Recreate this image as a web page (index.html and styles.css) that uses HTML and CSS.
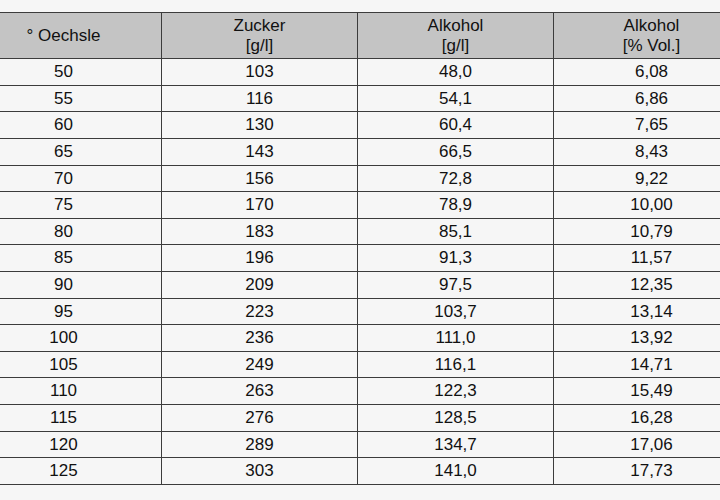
FILE: index.html
```
<!DOCTYPE html>
<html lang="de">
<head>
<meta charset="utf-8">
<title>Oechsle Tabelle</title>
<link rel="stylesheet" href="styles.css">
</head>
<body>
<div class="wrap">
<table class="oechsle">
  <colgroup><col><col><col><col></colgroup>
  <thead>
    <tr><th>° Oechsle</th><th>Zucker<br>[g/l]</th><th>Alkohol<br>[g/l]</th><th>Alkohol<br>[% Vol.]</th></tr>
  </thead>
  <tbody>
    <tr><td>50</td><td>103</td><td>48,0</td><td>6,08</td></tr>
    <tr><td>55</td><td>116</td><td>54,1</td><td>6,86</td></tr>
    <tr><td>60</td><td>130</td><td>60,4</td><td>7,65</td></tr>
    <tr><td>65</td><td>143</td><td>66,5</td><td>8,43</td></tr>
    <tr><td>70</td><td>156</td><td>72,8</td><td>9,22</td></tr>
    <tr><td>75</td><td>170</td><td>78,9</td><td>10,00</td></tr>
    <tr><td>80</td><td>183</td><td>85,1</td><td>10,79</td></tr>
    <tr><td>85</td><td>196</td><td>91,3</td><td>11,57</td></tr>
    <tr><td>90</td><td>209</td><td>97,5</td><td>12,35</td></tr>
    <tr><td>95</td><td>223</td><td>103,7</td><td>13,14</td></tr>
    <tr><td>100</td><td>236</td><td>111,0</td><td>13,92</td></tr>
    <tr><td>105</td><td>249</td><td>116,1</td><td>14,71</td></tr>
    <tr><td>110</td><td>263</td><td>122,3</td><td>15,49</td></tr>
    <tr><td>115</td><td>276</td><td>128,5</td><td>16,28</td></tr>
    <tr><td>120</td><td>289</td><td>134,7</td><td>17,06</td></tr>
    <tr><td>125</td><td>303</td><td>141,0</td><td>17,73</td></tr>
  </tbody>
</table>
</div>
</body>
</html>
```
FILE: styles.css
```
html, body {
  margin: 0;
  padding: 0;
  background: #f6f6f6;
}
.wrap {
  width: 720px;
  height: 500px;
  overflow: hidden;
  padding-top: 12px;
  box-sizing: border-box;
}
.oechsle {
  margin-left: -35px;
  width: 784px;
  table-layout: fixed;
  border-collapse: collapse;
  font-family: "Liberation Sans", Arial, sans-serif;
  font-size: 17px;
  color: #111;
}
.oechsle col {
  width: 196px;
}
.oechsle th,
.oechsle td {
  border: 1px solid #3c3c3c;
  text-align: center;
  padding: 3px 4px;
  line-height: 19.6px;
}
.oechsle th {
  background: #c4c4c4;
  font-weight: normal;
}
```
